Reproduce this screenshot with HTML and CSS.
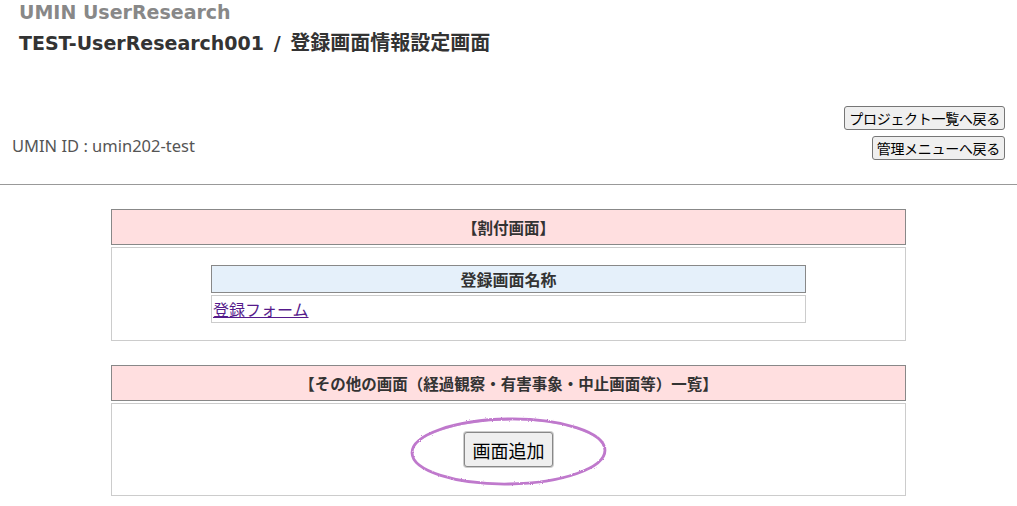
FILE: index.html
```html
<!DOCTYPE html>
<html lang="ja">
<head>
<meta charset="utf-8">
<title>登録画面情報設定画面</title>
<link rel="stylesheet" href="styles.css">
</head>
<body>
<header class="page-head">
  <div class="site-name">UMIN UserResearch</div>
  <h1 class="page-title">TEST-UserResearch001 / <span class="ja">登録画面情報設定画面</span></h1>
</header>
<div class="user-bar">
  <div class="user-id">UMIN ID : umin202-test</div>
  <div class="nav-buttons">
    <button class="btn">プロジェクト一覧へ戻る</button>
    <button class="btn">管理メニューへ戻る</button>
  </div>
</div>
<hr class="rule">
<main class="content">
  <section class="panel">
    <div class="panel-head">【割付画面】</div>
    <div class="panel-body">
      <div class="inner-table">
        <div class="inner-head">登録画面名称</div>
        <div class="inner-row"><a class="form-link" href="#">登録フォーム</a></div>
      </div>
    </div>
  </section>
  <section class="panel">
    <div class="panel-head">【その他の画面（経過観察・有害事象・中止画面等）一覧】</div>
    <div class="panel-body panel-body-center">
      <div class="add-wrap">
        <button class="btn btn-large">画面追加</button>
        <svg class="circle-mark" width="203" height="75" viewBox="0 0 203 75">
          <defs>
            <filter id="crayon" x="-5%" y="-10%" width="110%" height="120%">
              <feTurbulence type="fractalNoise" baseFrequency="0.9" numOctaves="2" seed="3" result="n"/>
              <feDisplacementMap in="SourceGraphic" in2="n" scale="2.2"/>
            </filter>
          </defs>
          <g filter="url(#crayon)" fill="none">
            <ellipse cx="101.5" cy="37.5" rx="96.5" ry="32.5" stroke="#a94bbb" stroke-width="2.8" stroke-opacity="0.75" transform="rotate(-0.8 101.5 37.5)"/>
            <ellipse cx="101.5" cy="37.8" rx="96" ry="32" stroke="#c07ccd" stroke-width="1.2" stroke-opacity="0.6" transform="rotate(-0.8 101.5 37.5)"/>
          </g>
        </svg>
      </div>
    </div>
  </section>
</main>
</body>
</html>
```
FILE: styles.css
```css
* { box-sizing: border-box; }
body {
  margin: 0;
  font-family: "DejaVu Sans", "Noto Sans CJK JP", sans-serif;
  color: #555;
  background: #fff;
}
.page-head {
  padding: 0 0 0 19px;
}
.site-name {
  font-size: 19px;
  font-weight: bold;
  color: #888;
  line-height: 24px;
}
.page-title {
  margin: 5px 0 0;
  font-size: 19px;
  font-weight: bold;
  color: #333;
  line-height: 26px;
  word-spacing: 3px;
}
.page-title .ja {
  font-family: "Noto Sans CJK JP", sans-serif;
  font-size: 20px;
}
.user-bar {
  display: flex;
  justify-content: space-between;
  align-items: flex-end;
  padding: 0 12px 0 12px;
  margin-top: 50px;
}
.user-id {
  font-family: "Noto Sans", "Noto Sans CJK JP", sans-serif;
  font-size: 16.5px;
  line-height: 20px;
  padding-bottom: 4px;
  color: #555;
}
.nav-buttons {
  display: flex;
  flex-direction: column;
  align-items: flex-end;
  gap: 6px;
}
.btn {
  font-family: "Noto Sans CJK JP", sans-serif;
  font-size: 14px;
  line-height: 18px;
  color: #000;
  background: #efefef;
  border: 1px solid #767676;
  border-radius: 3px;
  padding: 2px 4px;
  height: 24px;
  letter-spacing: -0.3px;
}
.rule {
  margin: 24px 0 0;
  border: 0;
  border-top: 1px solid #999;
  height: 0;
}
.content {
  display: flex;
  flex-direction: column;
  align-items: center;
  gap: 24px;
  padding-top: 24px;
}
.panel {
  width: 795px;
  display: flex;
  flex-direction: column;
  gap: 2px;
}
.panel-head {
  background: #ffdfe0;
  border: 1px solid #888;
  height: 36px;
  display: flex;
  align-items: center;
  justify-content: center;
  font-family: "Noto Sans CJK JP", sans-serif;
  font-size: 15.5px;
  font-weight: bold;
  color: #333;
}
.panel-body {
  border: 1px solid #ccc;
  padding: 17px 0;
  display: flex;
  justify-content: center;
}
.panel-body-center {
  height: 93px;
  align-items: center;
  padding: 0;
}
.inner-table {
  width: 595px;
  display: flex;
  flex-direction: column;
  gap: 2px;
}
.inner-head {
  background: #e5f0fa;
  border: 1px solid #888;
  height: 28px;
  display: flex;
  align-items: center;
  justify-content: center;
  font-family: "Noto Sans CJK JP", sans-serif;
  font-size: 16px;
  font-weight: bold;
  color: #333;
}
.inner-row {
  border: 1px solid #ccc;
  height: 28px;
  display: flex;
  align-items: center;
  padding-left: 1px;
}
.form-link {
  font-family: "Noto Sans CJK JP", sans-serif;
  font-size: 16px;
  color: #551a8b;
  text-decoration: underline;
}
.add-wrap {
  position: relative;
  display: flex;
}
.btn-large {
  font-size: 18px;
  line-height: 24px;
  height: 35px;
  padding: 3px 6px;
  width: 89px;
  letter-spacing: 0;
  border-color: #888;
  box-shadow: 0 0 0 1px #ccc;
}
.circle-mark {
  position: absolute;
  left: -57px;
  top: -18px;
  pointer-events: none;
}
```
